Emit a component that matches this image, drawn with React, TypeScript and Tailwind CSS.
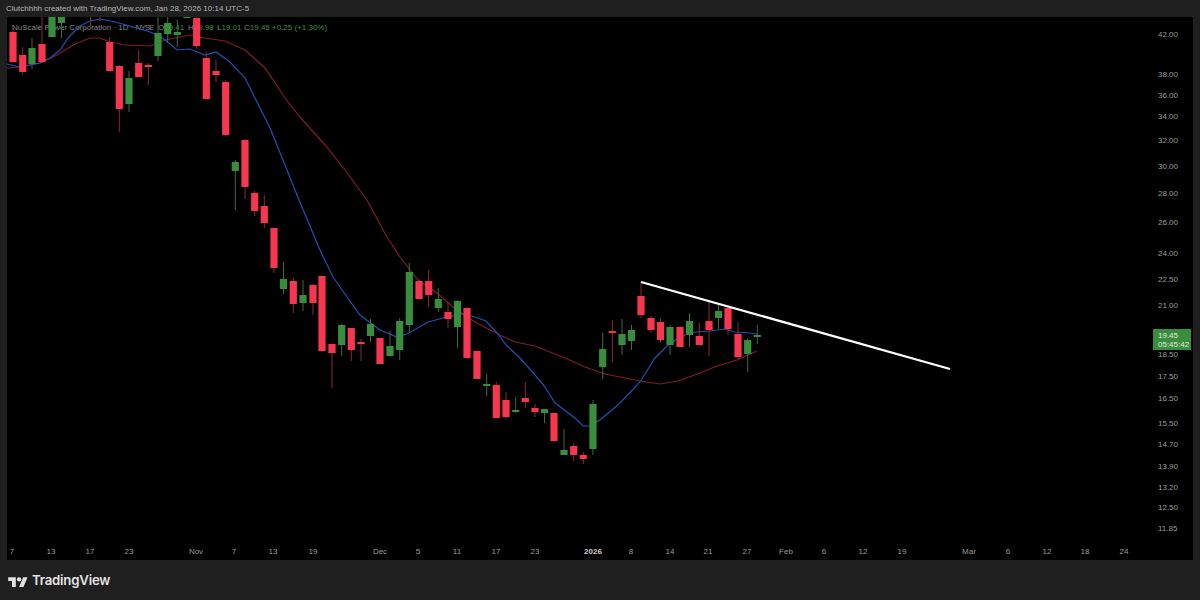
const UP = "up";
const DN = "dn";

// x, body top, body bottom, wick top, wick bottom (page pixels)
const candles: [number, number, number, number, number, string][] = [
  [13, 32, 62, 25, 62, DN], [22.7, 55, 72, 47, 75, DN], [32, 48, 64, 38, 69, UP], [42, 44, 62, 17, 63, DN],
  [52, 10, 37, 10, 37, UP], [61.5, 10, 23, 10, 38, UP], [90.5, 10, 14, 10, 26, DN], [100, 10, 14, 10, 21, DN],
  [109.7, 42, 71, 37, 71, DN], [119.3, 66, 109, 65, 132, DN], [129, 78, 104, 71, 112, UP], [138.7, 63, 77, 50, 77, DN],
  [148.3, 65, 67, 63, 85, DN], [158, 33, 56, 17, 61, UP], [167.7, 23, 34, 17, 43, UP], [177.3, 32, 35, 20, 47, UP],
  [187, 10, 18, 10, 18, UP], [196.7, 18, 46, 17, 49, DN], [206.3, 58, 99, 52, 99, DN], [216, 71, 75, 60, 82, DN],
  [225.7, 82, 135, 80, 136, DN], [235.3, 162, 171, 160, 210, UP], [245, 140, 187, 139, 199, DN], [254.7, 193, 211, 191, 216, DN],
  [264.3, 206, 223, 195, 228, DN], [274, 228, 268, 228, 273, DN], [283.5, 279, 289, 262, 294, UP], [293.3, 281, 304, 278, 313, DN],
  [303, 295, 303, 280, 311, UP], [313, 285, 303, 284, 315, DN], [322, 276, 351, 275, 352, DN], [332, 344, 353, 344, 388, DN],
  [341.7, 325, 345, 324, 356, UP], [351.3, 328, 350, 328, 361, DN], [361, 342, 344, 339, 361, DN], [370.5, 324, 336, 319, 342, UP],
  [380, 338, 364, 338, 364, DN], [390, 346, 356, 331, 356, UP], [399.7, 321, 350, 318, 360, UP], [409.3, 272, 325, 263, 333, UP],
  [419, 281, 299, 280, 299, DN], [428.7, 281, 295, 270, 307, DN], [438.3, 299, 308, 288, 312, UP], [448, 312, 319, 303, 328, DN],
  [457.5, 301, 327, 300, 348, UP], [467, 308, 358, 307, 358, DN], [477, 351, 379, 351, 379, DN], [486.7, 384, 386, 374, 396, UP],
  [496.3, 385, 418, 382, 418, DN], [506, 400, 417, 392, 419, DN], [515.7, 410, 412, 397, 413, UP], [525.3, 398, 402, 382, 408, DN],
  [535, 408, 412, 404, 417, DN], [544.5, 409, 413, 409, 423, UP], [554, 413, 441, 413, 442, DN], [564, 450, 455, 429, 455, UP],
  [573.7, 446, 455, 443, 461, DN], [583.3, 455, 459, 452, 464, DN], [593, 404, 449, 400, 455, UP], [602.7, 349, 367, 333, 379, UP],
  [612.3, 331, 333, 320, 362, DN], [622, 334, 345, 319, 355, UP], [631.5, 330, 341, 325, 350, UP], [641, 296, 315, 283, 318, DN],
  [651, 318, 330, 316, 333, DN], [660.5, 322, 340, 318, 343, DN], [670, 327, 345, 325, 355, UP], [680, 327, 347, 327, 347, DN],
  [689.5, 321, 335, 313, 347, UP], [699.3, 336, 345, 323, 345, DN], [709, 321, 330, 302, 356, DN], [718.5, 311, 318, 303, 329, UP],
  [728, 308, 329, 308, 335, DN], [738, 334, 357, 322, 359, DN], [747.7, 340, 354, 338, 372, UP], [757.3, 335, 337, 325, 344, UP],
];

const fastMa =
  "7,64 20,67 40,63 50,58 60,50 68,38 80,26 90,21 100,19 115,22 130,26 150,32 160,36 170,44 177,50 190,49 205,55 216,52 230,62 245,78 255,98 270,128 285,165 299,200 320,250 333,277 347,297 360,315 380,330 397,337 407,334 428,322 447,317 463,314 475,317 486,321 497,333 507,346 520,358 535,375 545,387 555,403 575,418 583,426 590,426 600,420 620,403 640,382 655,358 670,343 685,335 695,332 710,331 725,329 735,332 750,333 757,334";
const slowMa =
  "7,68 20,67 40,63 55,56 65,50 75,44 90,38 100,38 110,42 125,45 150,46 165,40 190,35 205,38 225,41 245,50 265,68 285,98 300,117 325,145 345,170 367,200 387,237 400,257 418,280 437,293 453,307 475,322 500,335 515,342 535,346 565,358 585,367 605,374 625,378 640,381 660,384 678,381 700,373 717,366 737,360 757,351";

const priceTicks: [string, number][] = [
  ["42.00", 34], ["38.00", 74], ["36.00", 95], ["34.00", 116], ["32.00", 140], ["30.00", 166], ["28.00", 193],
  ["26.00", 222], ["24.00", 253], ["22.50", 279], ["21.00", 305], ["18.50", 354], ["17.50", 376], ["16.50", 398],
  ["15.50", 423], ["14.70", 444], ["13.90", 466], ["13.20", 487], ["12.50", 507], ["11.85", 528],
];

const timeTicks: [string, number][] = [
  ["7", 12], ["13", 51], ["17", 90], ["23", 129], ["Nov", 196], ["7", 234], ["13", 273], ["19", 313], ["Dec", 380],
  ["5", 418], ["11", 457], ["17", 496], ["23", 535], ["2026", 593], ["8", 631], ["14", 670], ["21", 708], ["27", 747],
  ["Feb", 786], ["6", 824], ["12", 863], ["19", 902], ["Mar", 969], ["6", 1008], ["12", 1047], ["18", 1085], ["24", 1124],
];

const font = "font-['Liberation_Sans',Arial,sans-serif]";

const Chart = () => (
  <svg viewBox="7 17 1146 523" className="absolute inset-0 h-full w-full">
    <polyline points={slowMa} fill="none" stroke="#7f1d2a" strokeWidth="1.2" />
    <polyline points={fastMa} fill="none" stroke="#2050b4" strokeWidth="1.2" />
    {candles.map(([x, top, bottom, wickTop, wickBottom, dir], i) => (
      <g key={i}>
        <rect x={x - 0.5} y={wickTop} width="1" height={wickBottom - wickTop} fill={dir === UP ? "#3f6b46" : "#8a2a3a"} />
        <rect x={x - 3.6} y={top} width="7.2" height={bottom - top} fill={dir === UP ? "#388e3c" : "#f7374f"} />
      </g>
    ))}
    <line x1="641" y1="282" x2="950" y2="369" stroke="#ffffff" strokeWidth="2.3" />
  </svg>
);

const App = () => {
  return (
    <div className={`flex h-[600px] w-[1200px] flex-col overflow-hidden bg-[#1f1f1f] ${font}`}>
      <div className="flex h-[17px] items-center pl-[6px] text-[8px] text-[#b8b8b8]">
        Clutchhhh created with TradingView.com, Jan 28, 2026 10:14 UTC-5
      </div>

      <div className="mx-[7px] flex h-[543px] bg-black">
        <div className="flex w-[1146px] flex-col">
          <div className="relative h-[523px] overflow-hidden">
            <div className="absolute left-[5px] top-[5px] flex whitespace-nowrap text-[8px] text-[#858585]">
              <span className="w-[146px]">
                NuScale Power Corporation · 1D · <span className="tracking-[-1px]">NYSE</span>
              </span>
              <span className="w-[30px]">O<span className="text-[#388e3c]">19.41</span></span>
              <span className="w-[29px]">H<span className="text-[#388e3c]">19.98</span></span>
              <span className="w-[27px]">L<span className="text-[#388e3c]">19.01</span></span>
              <span className="w-[28px]">C<span className="text-[#388e3c]">19.45</span></span>
              <span className="text-[#388e3c]">+0.25 (+1.30%)</span>
            </div>
            <Chart />
          </div>
          <div className="relative h-[20px] text-[8px] text-[#9b9b9b]">
            {timeTicks.map(([label, x]) => (
              <span
                key={label + x}
                className={`absolute top-[6px] -translate-x-1/2 ${label === "2026" ? "font-bold text-[#cfcfcf]" : ""}`}
                style={{ left: x - 7 }}
              >
                {label}
              </span>
            ))}
          </div>
        </div>

        <div className="relative flex-1 text-[8px] text-[#9b9b9b]">
          {priceTicks.map(([label, y]) => (
            <span key={label} className="absolute left-[5px] -translate-y-1/2" style={{ top: y - 16 }}>
              {label}
            </span>
          ))}
          <div className="absolute left-0 top-[312px] flex h-[21px] w-[38px] flex-col justify-center bg-[#388e3c] pl-[5px] text-[8px] leading-[9px] text-[#e6e6e6]">
            <span>19.45</span>
            <span>05:45:42</span>
          </div>
        </div>
      </div>

      <div className="flex flex-1 items-center gap-[4px] pt-[2px] pl-[8px] text-[#e2e2e2]">
        <svg viewBox="0 0 36 22" className="h-[12px] w-[20px]" fill="currentColor">
          <path d="M14 22H7V11H0V4h14v18zM28 22h-8l7.5-18h8L28 22z" />
          <circle cx="20" cy="8" r="4" />
        </svg>
        <span className="font-['Inter',sans-serif] text-[13.2px] font-semibold leading-none tracking-[-0.2px]">TradingView</span>
      </div>
    </div>
  );
};

export default App;
